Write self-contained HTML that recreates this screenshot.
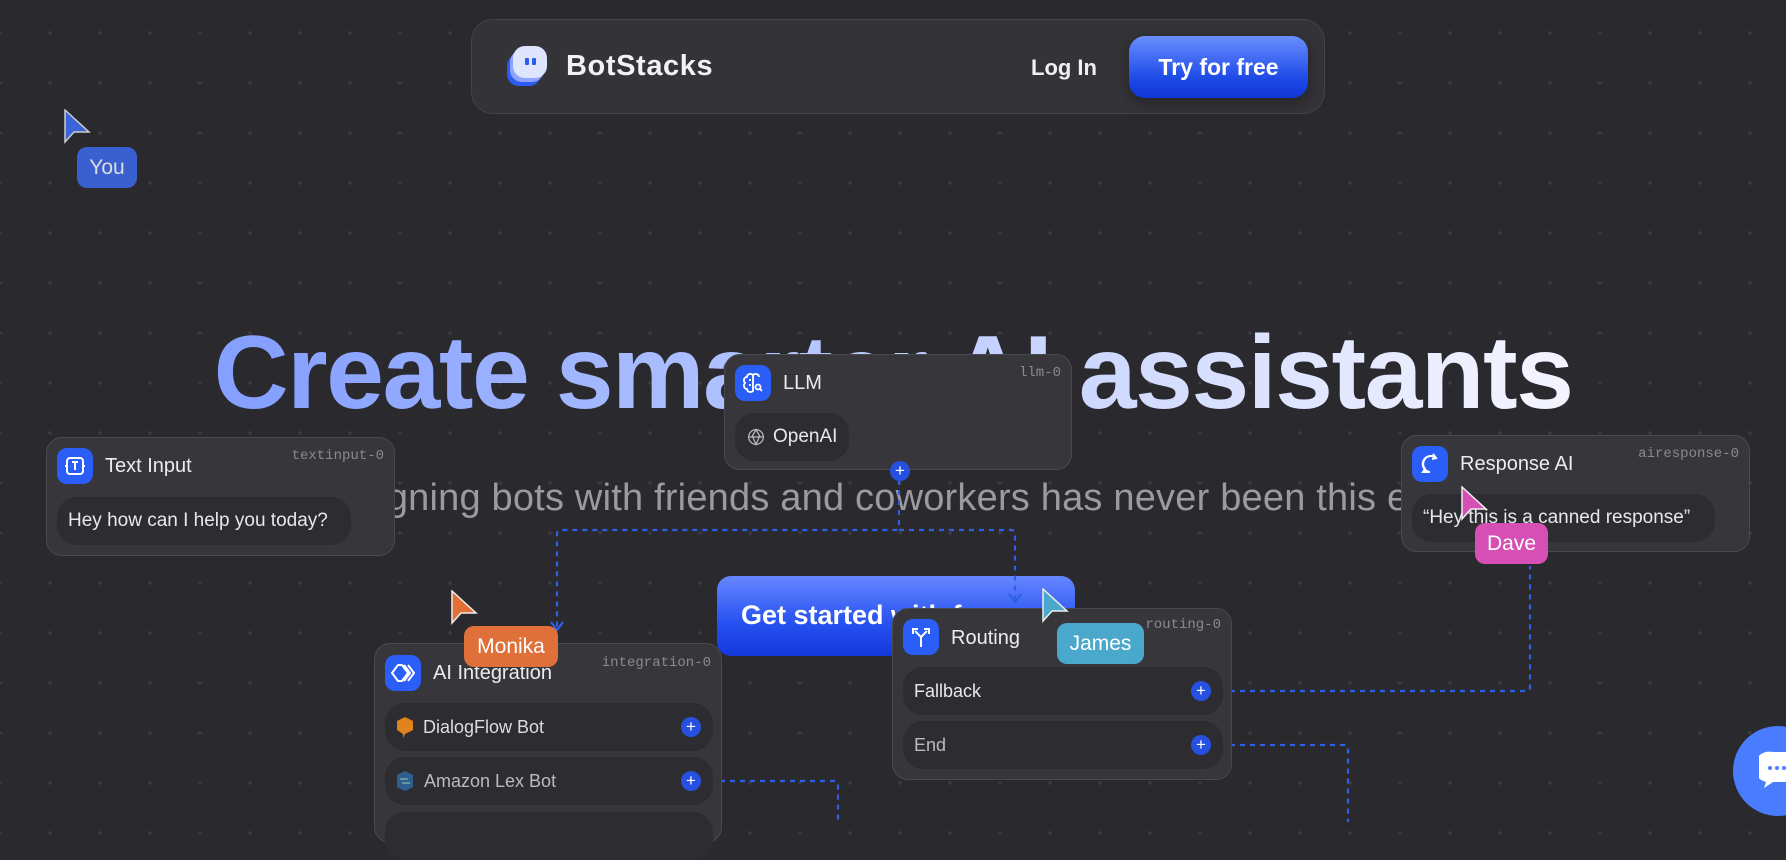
<!DOCTYPE html>
<html><head><meta charset="utf-8"><style>
*{box-sizing:border-box;margin:0;padding:0}
body{width:1786px;height:822px;overflow:hidden;background:#2a292e;font-family:"Liberation Sans",sans-serif;position:relative;
background-image:radial-gradient(circle,#3a393f 1.6px,transparent 2.2px);background-size:50px 50px;background-position:-25px 8px}
.abs{position:absolute}
.nav{left:471px;top:19px;width:854px;height:95px;border-radius:22px;background:#343338;border:1px solid #444349}
.brand{left:566px;top:50px;font-size:29px;font-weight:bold;color:#f2f2f5;letter-spacing:0.6px}
.login{left:1031px;top:55px;font-size:22px;font-weight:bold;color:#f0f0f0}
.try{left:1129px;top:36px;width:179px;height:62px;border-radius:16px;background:linear-gradient(#6a8fff,#1c48e6 70%,#1036d6);color:#fff;font-size:23px;font-weight:bold;display:flex;align-items:center;justify-content:center;box-shadow:0 4px 14px rgba(0,0,0,.35)}
h1{position:absolute;left:0;width:1786px;top:318px;text-align:center;font-size:104px;font-weight:bold;letter-spacing:-1.5px;line-height:110px;
background:linear-gradient(90deg,#86a0ff 15%,#b5c6ff 45%,#f2f3ff 85%);-webkit-background-clip:text;background-clip:text;color:transparent}
.sub{left:-100px;width:1986px;top:477px;text-align:center;font-size:38px;letter-spacing:0.2px;color:#9b9aa0;white-space:nowrap}
.cta{left:717px;top:576px;width:358px;height:80px;border-radius:14px;background:linear-gradient(#6687ff,#2650f0 60%,#1538dc);color:#fff;font-size:27px;font-weight:bold;padding:24px 0 0 24px}
.node{position:absolute;background:#37363b;border:1.5px solid #4a494f;border-radius:16px}
.ico{position:absolute;left:10px;top:10px;width:36px;height:36px;border-radius:10px;background:#2a5ef6;display:flex;align-items:center;justify-content:center}
.title{position:absolute;left:58px;top:17px;font-size:20px;color:#ececf0}
.id{position:absolute;right:10px;top:10px;font-family:"Liberation Mono",monospace;font-size:14px;color:#8a8990}
.pill{position:absolute;left:10px;height:48px;border-radius:20px;background:#2d2c31;font-size:19px;color:#e8e8ec;display:flex;align-items:center;padding-left:11px}
.plus{position:absolute;width:20px;height:20px;border-radius:50%;background:#2550e0;color:#fff;font-size:17px;line-height:19px;text-align:center}
.lbl{position:absolute;height:41px;border-radius:10px;color:#fff;font-size:21px;display:flex;align-items:center;justify-content:center}
svg.lines{position:absolute;left:0;top:0}
</style></head><body>
<div class="abs nav"></div>
<svg class="abs" style="left:505px;top:44px" width="44" height="48" viewBox="0 0 44 48">
<rect x="2" y="10" width="34" height="32" rx="12" fill="#2d5cf5"/>
<rect x="5" y="6" width="34" height="32" rx="12" fill="#8ea4ff"/>
<rect x="8" y="2" width="34" height="32" rx="12" fill="#dfe4ff"/>
<rect x="20" y="14" width="4" height="7" rx="1" fill="#2d5cf5"/><rect x="27" y="14" width="4" height="7" rx="1" fill="#2d5cf5"/>
</svg>
<div class="abs brand">BotStacks</div>
<div class="abs login">Log In</div>
<div class="abs try">Try for free</div>

<h1>Create smarter AI assistants</h1>
<div class="abs sub">Designing bots with friends and coworkers has never been this easy.</div>
<div class="abs cta">Get started with free</div>

<svg class="lines" width="1786" height="822" fill="none" stroke="#2f5fe6" stroke-width="2.2" stroke-dasharray="5 5">
<path d="M899 470 V526 q0 4 -4 4 H561 q-4 0 -4 4 V628"/>
<path d="M899 530 H1011 q4 0 4 4 V600"/>
<path d="M1200 691 H1526 q4 0 4 -4 V566"/>
<path d="M1200 745 H1344 q4 0 4 4 V822"/>
<path d="M690 781 H834 q4 0 4 4 V822"/>
<path d="M551 622 l6 8 l6 -8 M1009 594 l6 8 l6 -8" stroke-dasharray="none"/>
</svg>

<!-- Text Input -->
<div class="node" style="left:46px;top:437px;width:349px;height:119px">
<div class="ico"><svg width="24" height="24" viewBox="0 0 24 24" fill="none" stroke="#fff" stroke-width="2"><rect x="4" y="4" width="16" height="16" rx="3"/><path d="M9 8h6M12 8v8M2 12h2M20 12h2"/></svg></div>
<div class="title">Text Input</div><div class="id">textinput-0</div>
<div class="pill" style="top:59px;width:294px">Hey how can I help you today?</div>
</div>

<!-- LLM -->
<div class="node" style="left:724px;top:354px;width:348px;height:116px">
<div class="ico"><svg width="24" height="24" viewBox="0 0 24 24" fill="none" stroke="#fff" stroke-width="1.8"><path d="M12 4c-2-2-6-1-6 2-3 0-4 4-2 6-2 2-1 6 2 6 0 3 4 4 6 2zM12 4c2-2 6-1 6 2M12 4v16M8 9h2M8 14h2"/><circle cx="17" cy="16" r="2.5"/><path d="M19 18l2 2"/></svg></div>
<div class="title">LLM</div><div class="id">llm-0</div>
<div class="pill" style="top:58px;width:114px;padding-left:10px"><svg width="22" height="22" viewBox="0 0 24 24" fill="none" stroke="#bbb" stroke-width="1.4" style="margin-right:6px"><circle cx="12" cy="12" r="8"/><path d="M12 4l4 7-4 9-4-9zM4 12h16"/></svg>OpenAI</div>
<div class="plus" style="left:165px;top:106px">+</div>
</div>

<!-- Response AI -->
<div class="node" style="left:1401px;top:435px;width:349px;height:117px">
<div class="ico"><svg width="24" height="24" viewBox="0 0 24 24" fill="none" stroke="#fff" stroke-width="2"><path d="M18 6A8 8 0 1 0 12 20H5l2-3A8 8 0 0 1 12 4"/><path d="M15 2l3 4-4 1"/></svg></div>
<div class="title">Response AI</div><div class="id">airesponse-0</div>
<div class="pill" style="top:58px;width:303px">“Hey this is a canned response”</div>
</div>

<!-- AI Integration -->
<div class="node" style="left:374px;top:643px;width:348px;height:200px">
<div class="ico" style="top:11px"><svg width="26" height="24" viewBox="0 0 26 24" fill="none" stroke="#fff" stroke-width="2"><path d="M8 4l-6 8 6 8h4l6-8-6-8zM14 4l6 8-6 8M18 4l6 8-6 8"/></svg></div>
<div class="title" style="top:18px">AI Integration</div><div class="id" style="top:11px">integration-0</div>
<div class="pill" style="top:59px;width:328px;font-size:18px;color:#ddd"><svg width="18" height="22" viewBox="0 0 18 22" style="margin-right:9px"><path d="M9 1l8 4v9l-8 4-2 4v-4l-6-4V5z" fill="#e0831c"/></svg>DialogFlow Bot</div>
<div class="pill" style="top:113px;width:328px;font-size:18px;color:#bbb"><svg width="18" height="22" viewBox="0 0 18 22" style="margin-right:10px"><path d="M9 1l8 4v12l-8 4-8-4V5z" fill="#2f5f8f"/><path d="M4 9h8M6 13h8" stroke="#7aa" stroke-width="1.5"/></svg>Amazon Lex Bot</div>
<div class="pill" style="top:168px;width:328px"></div>
<div class="plus" style="left:306px;top:73px">+</div>
<div class="plus" style="left:306px;top:127px">+</div>
</div>

<!-- Routing -->
<div class="node" style="left:892px;top:608px;width:340px;height:172px">
<div class="ico"><svg width="24" height="24" viewBox="0 0 24 24" fill="none" stroke="#fff" stroke-width="2"><path d="M12 22V12L6 6M12 12l6-6M4 9V4h5M20 9V4h-5"/></svg></div>
<div class="title" style="top:18px">Routing</div><div class="id" style="top:8px">routing-0</div>
<div class="pill" style="top:58px;width:320px;font-size:18px">Fallback</div>
<div class="pill" style="top:112px;width:320px;font-size:18px;color:#bbb">End</div>
<div class="plus" style="left:298px;top:72px">+</div>
<div class="plus" style="left:298px;top:126px">+</div>
</div>

<!-- cursors -->
<svg class="abs" style="left:64px;top:109px" width="28" height="36"><path d="M1 1v32l9-10h15z" fill="#3a64d8" stroke="#ccc" stroke-width="1.5"/></svg>
<div class="lbl" style="left:77px;top:147px;width:60px;background:#3a60d0;color:#ddd">You</div>
<svg class="abs" style="left:451px;top:590px" width="28" height="36"><path d="M1 1v32l9-10h15z" fill="#e26f33" stroke="#eee" stroke-width="1.5"/></svg>
<div class="lbl" style="left:464px;top:626px;width:94px;background:#e0703a">Monika</div>
<svg class="abs" style="left:1042px;top:588px" width="28" height="36"><path d="M1 1v32l9-10h15z" fill="#4aa8cc" stroke="#eee" stroke-width="1.5"/></svg>
<div class="lbl" style="left:1057px;top:623px;width:87px;background:#4aa8cc">James</div>
<svg class="abs" style="left:1461px;top:486px" width="28" height="36"><path d="M1 1v32l9-10h15z" fill="#d64fb4" stroke="#eee" stroke-width="1.5"/></svg>
<div class="lbl" style="left:1475px;top:523px;width:73px;background:#d64fb4">Dave</div>

<!-- chat bubble -->
<div class="abs" style="left:1733px;top:726px;width:90px;height:90px;border-radius:50%;background:#4a7cff"></div>
<svg class="abs" style="left:1759px;top:750px" width="27" height="42" viewBox="0 0 27 42"><path d="M14 2h13v30H14l-9 6 2-6a15 15 0 0 1 7-30z" fill="#fff"/><circle cx="11" cy="18" r="2" fill="#4a7cff"/><circle cx="18" cy="18" r="2" fill="#4a7cff"/><circle cx="25" cy="18" r="2" fill="#4a7cff"/></svg>
</body></html>
